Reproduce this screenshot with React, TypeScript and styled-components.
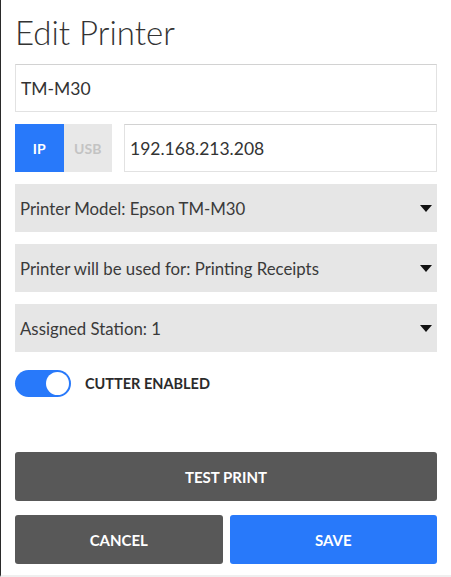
import React from "react";
import styled, { createGlobalStyle } from "styled-components";

const Global = createGlobalStyle`
  html, body { margin: 0; padding: 0; background: #fff; }
  body { font-family: Lato, "Open Sans", sans-serif; color: #333; }
  * { box-sizing: border-box; }
`;

const Page = styled.div`
  width: 451px;
  height: 577px;
  border-left: 1px solid #2a2a2a;
  border-bottom: 2px solid #efefef;
  padding: 14px 14px 0 14px;
  display: flex;
  flex-direction: column;
  & > * { flex-shrink: 0; }
`;

const Title = styled.h1`
  margin: 0;
  font-weight: 300;
  font-size: 33px;
  line-height: 36px;
  color: #333;
  height: 50px;
`;

const Form = styled.div`
  display: flex;
  flex-direction: column;
  gap: 12px;
  & > * { flex-shrink: 0; }
`;

const TextInput = styled.div<{ $grow?: boolean }>`
  height: 48px;
  border: 1px solid #e2e2e2;
  border-top-color: #d2d2d2;
  display: flex;
  align-items: center;
  padding: 0 5px;
  font-size: 17.5px;
  color: #333;
  flex: ${(p) => (p.$grow ? "1 1 auto" : "0 0 auto")};
`;

const Row = styled.div`
  display: flex;
  gap: 12px;
`;

const Segment = styled.div`
  display: flex;
  width: 97px;
  height: 48px;
`;

const SegButton = styled.div<{ $active?: boolean }>`
  flex: 1;
  display: flex;
  align-items: center;
  justify-content: center;
  font-weight: 700;
  font-size: 14px;
  background: ${(p) => (p.$active ? "#2879fa" : "#e8e8e8")};
  color: ${(p) => (p.$active ? "#fff" : "#c3c3c3")};
`;

const Select = styled.div`
  height: 48px;
  background: #e6e6e6;
  display: flex;
  align-items: center;
  justify-content: space-between;
  padding: 0 5px 0 5px;
  font-size: 16.8px;
  color: #3a3a3a;
`;

const Arrow = styled.span`
  width: 0;
  height: 0;
  border-left: 6.5px solid transparent;
  border-right: 6.5px solid transparent;
  border-top: 7px solid #111;
`;

const ToggleRow = styled.div`
  display: flex;
  align-items: center;
  gap: 14px;
  margin-top: 6px;
`;

const Switch = styled.div`
  width: 56px;
  height: 27px;
  border-radius: 14px;
  background: #2879fa;
  display: flex;
  align-items: center;
  justify-content: flex-end;
  padding-right: 2px;
`;

const Knob = styled.div`
  width: 23px;
  height: 23px;
  border-radius: 50%;
  background: #fff;
`;

const ToggleLabel = styled.span`
  font-weight: 700;
  font-size: 14.5px;
  color: #2b2b2b;
`;

const Actions = styled.div`
  margin-top: 55px;
  display: flex;
  flex-direction: column;
  gap: 14px;
  & > * { flex-shrink: 0; }
`;

const Button = styled.div<{ $primary?: boolean }>`
  height: 49px;
  border-radius: 3px;
  background: ${(p) => (p.$primary ? "#2879fa" : "#585858")};
  color: #fff;
  font-weight: 700;
  font-size: 15px;
  display: flex;
  align-items: center;
  justify-content: center;
`;

const ButtonRow = styled.div`
  display: flex;
  gap: 7px;
  & > * { flex: 1 1 0; }
`;

export default function App() {
  return (
    <>
      <Global />
      <Page>
        <Title>Edit Printer</Title>
        <Form>
          <TextInput>TM-M30</TextInput>
          <Row>
            <Segment>
              <SegButton $active>IP</SegButton>
              <SegButton>USB</SegButton>
            </Segment>
            <TextInput $grow>192.168.213.208</TextInput>
          </Row>
          <Select>
            Printer Model: Epson TM-M30
            <Arrow />
          </Select>
          <Select>
            Printer will be used for: Printing Receipts
            <Arrow />
          </Select>
          <Select>
            Assigned Station: 1
            <Arrow />
          </Select>
          <ToggleRow>
            <Switch>
              <Knob />
            </Switch>
            <ToggleLabel>CUTTER ENABLED</ToggleLabel>
          </ToggleRow>
        </Form>
        <Actions>
          <Button>TEST PRINT</Button>
          <ButtonRow>
            <Button>CANCEL</Button>
            <Button $primary>SAVE</Button>
          </ButtonRow>
        </Actions>
      </Page>
    </>
  );
}
